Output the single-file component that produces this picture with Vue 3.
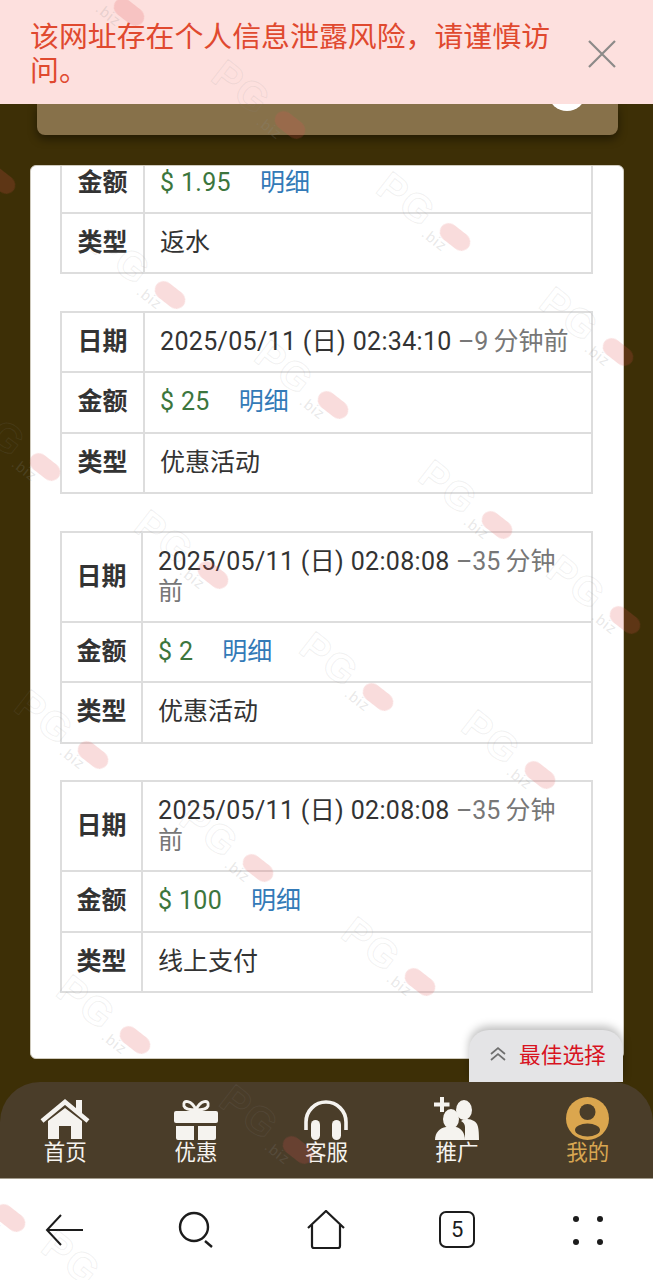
<script setup>
const notice = '该网址存在个人信息泄露风险\uFF0C请谨慎访问。'

const records = [
  { date: null, amount: '$ 1.95', type: '返水', cut: true },
  { date: '2025/05/11 (日) 02:34:10', ago: '–9 分钟前', amount: '$ 25', type: '优惠活动' },
  { date: '2025/05/11 (日) 02:08:08', ago: '–35 分钟前', amount: '$ 2', type: '优惠活动', narrow: true },
  { date: '2025/05/11 (日) 02:08:08', ago: '–35 分钟前', amount: '$ 100', type: '线上支付', narrow: true },
]

// pink spot of every PG.biz mark
const marks = [
  [129, 12], [290, 125], [0, 180], [455, 237], [170, 295], [618, 352], [333, 405],
  [45, 467], [497, 525], [213, 575], [625, 620], [378, 697], [93, 755], [540, 775],
  [258, 868], [420, 982], [135, 1040], [298, 1150], [10, 1218], [120, 1296],
]

const tabs = [
  { label: '首页', icon: 'home' },
  { label: '优惠', icon: 'gift' },
  { label: '客服', icon: 'phones' },
  { label: '推广', icon: 'people' },
  { label: '我的', icon: 'me', active: true },
]

function markStyle(m) {
  return { left: m[0] - 88 + 'px', top: m[1] - 20 + 'px' }
}
</script>

<template>
  <div class="page">
    <div class="banner">
      <p>{{ notice }}</p>
      <svg class="close" width="30" height="30" viewBox="0 0 30 30">
        <path d="M2 2L28 28M28 2L2 28" stroke="#8c8a88" stroke-width="2.2" fill="none" />
      </svg>
    </div>

    <div class="main">
      <div class="goldcard"><span class="knob"></span></div>

      <div class="panel">
        <table v-for="(r, i) in records" :key="i" :class="{ cut: r.cut, narrow: r.narrow }">
          <tbody>
            <tr v-if="r.date" :class="{ tall: r.narrow }">
              <th>日期</th>
              <td><span class="digits">{{ r.date }}</span> <span class="ago">{{ r.ago }}</span></td>
            </tr>
            <tr>
              <th>金额</th>
              <td><span class="money digits">{{ r.amount }}</span><a class="detail">明细</a></td>
            </tr>
            <tr>
              <th>类型</th>
              <td>{{ r.type }}</td>
            </tr>
          </tbody>
        </table>
      </div>

      <div class="best">
        <svg width="18" height="16" viewBox="0 0 18 16">
          <path d="M2 8L9 2L16 8M2 14L9 8L16 14" stroke="#6f6f6f" stroke-width="1.7" fill="none" />
        </svg>
        <span>最佳选择</span>
      </div>
    </div>

    <nav class="tabbar">
      <div v-for="t in tabs" :key="t.label" class="tab" :class="{ active: t.active }">
        <svg v-if="t.icon === 'home'" width="50" height="41" viewBox="0 0 50 41">
          <path d="M2 22L25 3L48 22" stroke="#f5f3ef" stroke-width="4.5" fill="none" />
          <path d="M36 1H42V15L36 10Z" fill="#f5f3ef" />
          <path d="M8 22L25 9L42 22V40H31V27H19V40H8Z" fill="#f5f3ef" />
        </svg>
        <svg v-if="t.icon === 'gift'" width="44" height="41" viewBox="0 0 44 41">
          <path d="M22 11C18 1 8 0 10 7C11 10 15 11 22 11C29 11 33 10 34 7C36 0 26 1 22 11Z" stroke="#f5f3ef" stroke-width="3" fill="none" />
          <rect x="0" y="12" width="44" height="12" rx="2" fill="#f5f3ef" />
          <path d="M2 27H20V41H4Q2 41 2 39ZM24 27H42V39Q42 41 40 41H24Z" fill="#f5f3ef" />
        </svg>
        <svg v-if="t.icon === 'phones'" width="46" height="41" viewBox="0 0 46 41">
          <path d="M3 31V23A20 20 0 0 1 43 23V31" stroke="#f5f3ef" stroke-width="3.6" fill="none" />
          <rect x="8" y="21" width="9" height="20" rx="4.5" fill="#f5f3ef" />
          <rect x="29" y="21" width="9" height="20" rx="4.5" fill="#f5f3ef" />
        </svg>
        <svg v-if="t.icon === 'people'" width="46" height="43" viewBox="0 0 46 43">
          <path d="M6 0H10V5.500H15.500V9.500H10V15H6V9.500H0V5.500H6Z" fill="#f5f3ef" />
          <ellipse cx="30" cy="13" rx="8" ry="10" fill="#f5f3ef" />
          <path d="M31 43V30C31 27 29 25 27 24C32 21 36 22 40 24C44 26 45 31 45 43Z" fill="#f5f3ef" />
          <ellipse cx="17" cy="22" rx="8" ry="10" fill="#f5f3ef" />
          <path d="M1 43C1 35 6 31 12 30H22C27 31 31 36 31 43Z" fill="#f5f3ef" />
        </svg>
        <svg v-if="t.icon === 'me'" width="43" height="43" viewBox="0 0 43 43">
          <circle cx="21.500" cy="21.500" r="21.500" fill="#dba64e" />
          <circle cx="21.500" cy="15" r="8" fill="#4a3d29" />
          <ellipse cx="21.500" cy="33" rx="12.500" ry="6.500" fill="#4a3d29" />
        </svg>
        <span>{{ t.label }}</span>
      </div>
    </nav>

    <div class="browserbar">
      <svg width="40" height="36" viewBox="0 0 40 36">
        <path d="M38 18H2M16 3L2 18L16 33" stroke="#1c1c1c" stroke-width="2" fill="none" />
      </svg>
      <svg width="38" height="38" viewBox="0 0 38 38">
        <circle cx="17" cy="16" r="14" stroke="#1c1c1c" stroke-width="2.400" fill="none" />
        <path d="M28 30L35 36" stroke="#1c1c1c" stroke-width="2.400" fill="none" />
      </svg>
      <svg width="40" height="40" viewBox="0 0 40 40">
        <path d="M2 18L20 1L38 18M6 15V36Q6 38 8 38H32Q34 38 34 36V15" stroke="#1c1c1c" stroke-width="2.200" fill="none" />
      </svg>
      <span class="tabcount">5</span>
      <svg width="30" height="30" viewBox="0 0 30 30">
        <circle cx="3" cy="4" r="3" fill="#1c1c1c" />
        <circle cx="27" cy="4" r="3" fill="#1c1c1c" />
        <circle cx="3" cy="27" r="3" fill="#1c1c1c" />
        <circle cx="27" cy="27" r="3" fill="#1c1c1c" />
      </svg>
    </div>

    <div v-for="(m, i) in marks" :key="i" class="mark" :style="markStyle(m)">
      <span class="mark-text">PG</span>
      <span class="mark-biz">.biz</span>
      <span class="mark-spot"></span>
    </div>
  </div>
</template>

<style scoped>
.page {
  position: relative;
  width: 653px;
  height: 1280px;
  overflow: hidden;
  display: flex;
  flex-direction: column;
  background: #3d2f06;
  font-family: Roboto, "Noto Sans CJK SC", sans-serif;
  color: #333;
}

.banner {
  position: relative;
  z-index: 3;
  height: 104px;
  flex: none;
  box-sizing: border-box;
  padding: 20px 36px 0 30px;
  display: flex;
  justify-content: space-between;
  background: #fde0de;
}
.banner p {
  margin: 0;
  width: 530px;
  font-size: 28.9px;
  line-height: 34px;
  color: #e0492f;
}
.close {
  margin-top: 19px;
  flex: none;
}

.main {
  position: relative;
  flex: 1;
  padding: 0 29px 0 30px;
}

.goldcard {
  position: relative;
  height: 31px;
  margin: 0 6px 0 7px;
  background: #87714a;
  border-radius: 0 0 8px 8px;
  box-shadow: 0 4px 10px rgba(0, 0, 0, 0.45);
}
.knob {
  position: absolute;
  right: 33px;
  top: -25px;
  width: 36px;
  height: 32px;
  border-radius: 50%;
  background: #fff;
}

.panel {
  box-sizing: border-box;
  height: 894px;
  margin-top: 30px;
  padding: 0 29px;
  overflow: hidden;
  background: #fff;
  border: 1px solid #cfcabd;
  border-radius: 6px;
}

table {
  width: 533px;
  margin-bottom: 36.5px;
  border-collapse: collapse;
  table-layout: fixed;
  font-size: 25px;
}
table.cut {
  margin-top: -15px;
}
th, td {
  height: 60.5px;
  padding: 0 0 6px 15px;
  border: 2px solid #ddd;
  text-align: left;
  white-space: nowrap;
  box-sizing: border-box;
}
th {
  width: 83px;
  padding: 0 0 6px;
  text-align: center;
  font-weight: 700;
  color: #333;
}
.narrow th {
  width: 81px;
}
.cut td, .cut th {
  padding-bottom: 5px;
}
.tall td {
  height: 90px;
  padding-right: 25px;
  padding-bottom: 0;
  white-space: normal;
  line-height: 30px;
}
.digits {
  letter-spacing: 0.33px;
}
.ago {
  color: #777;
  word-spacing: -1px;
}
.money {
  color: #3c763d;
}
.detail {
  margin-left: 29px;
  color: #337ab7;
}

.best {
  position: absolute;
  right: 30px;
  bottom: -23px;
  z-index: 1;
  width: 154px;
  height: 52px;
  box-sizing: border-box;
  padding: 0 0 5px 20px;
  display: flex;
  align-items: center;
  gap: 12px;
  background: #e4e4e6;
  border-radius: 20px 20px 0 0;
  box-shadow: 0 -4px 8px rgba(0, 0, 0, 0.25);
  font-size: 21.700px;
  color: #d8131f;
}

.tabbar {
  position: relative;
  z-index: 2;
  height: 97px;
  flex: none;
  margin-top: 23px;
  display: grid;
  grid-template-columns: repeat(5, 1fr);
  background: #4a3d29;
  border-radius: 40px 40px 0 0;
  border-bottom: 1px solid #a39c8c;
  box-sizing: border-box;
}
.tab {
  display: flex;
  flex-direction: column;
  align-items: center;
  justify-content: flex-end;
  padding-bottom: 13px;
  color: #f5f3ef;
  font-size: 21.500px;
  line-height: 25px;
}
.tab.active {
  color: #d8a651;
}

.browserbar {
  height: 101px;
  flex: none;
  display: grid;
  grid-template-columns: repeat(5, 1fr);
  justify-items: center;
  align-items: center;
  background: #fff;
}
.tabcount {
  width: 36px;
  height: 37px;
  box-sizing: border-box;
  display: flex;
  align-items: center;
  justify-content: center;
  border: 2.400px solid #1c1c1c;
  border-radius: 7px;
  font-size: 22px;
  font-weight: 400;
  color: #1c1c1c;
}

.mark {
  position: absolute;
  z-index: 5;
  width: 106px;
  height: 44px;
  transform-origin: 88px 20px;
  transform: rotate(38deg);
  pointer-events: none;
}
.mark-text {
  position: absolute;
  left: -4px;
  top: 0;
  font-family: "Liberation Sans", sans-serif;
  font-size: 40px;
  line-height: 40px;
  font-weight: 700;
  letter-spacing: 2px;
  color: transparent;
  -webkit-text-stroke: 1px rgba(140, 140, 140, 0.13);
}
.mark-biz {
  position: absolute;
  left: 60px;
  top: 26px;
  font-family: "Liberation Sans", sans-serif;
  font-size: 15px;
  line-height: 18px;
  letter-spacing: 1px;
  color: rgba(140, 140, 140, 0.2);
}
.mark-spot {
  position: absolute;
  left: 71px;
  top: 11px;
  width: 34px;
  height: 18px;
  border-radius: 9px;
  background: rgba(225, 80, 80, 0.2);
  filter: blur(0.6px);
}
</style>
